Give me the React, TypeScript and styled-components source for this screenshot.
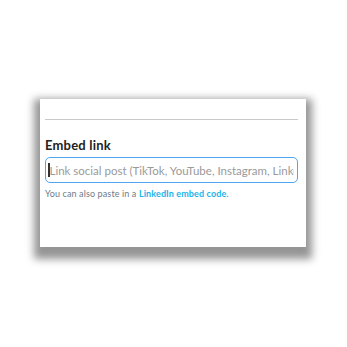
import React from "react";
import styled, { createGlobalStyle } from "styled-components";

const Global = createGlobalStyle`
  html, body { margin: 0; padding: 0; background: #ffffff; }
  body { font-family: "Lato", "Open Sans", sans-serif; }
`;

const Page = styled.div`
  width: 347px;
  height: 347px;
  display: flex;
  align-items: flex-start;
  padding: 99px 0 0 40px;
  box-sizing: border-box;
`;

const Panel = styled.div`
  width: 266px;
  height: 148px;
  background: #ffffff;
  box-sizing: border-box;
  padding: 20px 8px 0 5px;
  display: flex;
  flex-direction: column;
  box-shadow: 0 6px 8px 6px rgba(0, 0, 0, 0.42);
`;

const Divider = styled.hr`
  margin: 0;
  border: none;
  height: 1px;
  background: #c9c9c9;
`;

const Label = styled.label`
  margin-top: 17px;
  font-size: 13px;
  font-weight: 700;
  color: #222222;
  line-height: 16px;
  letter-spacing: 0.2px;
`;

const Field = styled.div`
  margin-top: 4px;
  height: 26px;
  box-sizing: border-box;
  border: 1.5px solid #4ea6f2;
  border-radius: 5px;
  display: flex;
  align-items: center;
  padding: 0 3px 0 2px;
  overflow: hidden;
`;

const Caret = styled.span`
  width: 1.5px;
  height: 14px;
  background: #333;
  flex: none;
`;

const Placeholder = styled.span`
  font-size: 11.5px;
  letter-spacing: 0;
  color: #9a9a9a;
  white-space: nowrap;
  overflow: hidden;
`;

const Help = styled.p`
  margin: 5px 0 0 0;
  font-size: 9px;
  letter-spacing: 0.12px;
  line-height: 12px;
  color: #6f7b89;
`;

const Link = styled.a`
  color: #1ab4ea;
  font-weight: 700;
  text-decoration: none;
`;

export default function App() {
  return (
    <>
      <Global />
      <Page>
        <Panel>
          <Divider />
          <Label>Embed link</Label>
          <Field>
            <Caret />
            <Placeholder>Link social post (TikTok, YouTube, Instagram, LinkedIn)</Placeholder>
          </Field>
          <Help>
            You can also paste in a <Link href="#">LinkedIn embed code</Link>.
          </Help>
        </Panel>
      </Page>
    </>
  );
}
